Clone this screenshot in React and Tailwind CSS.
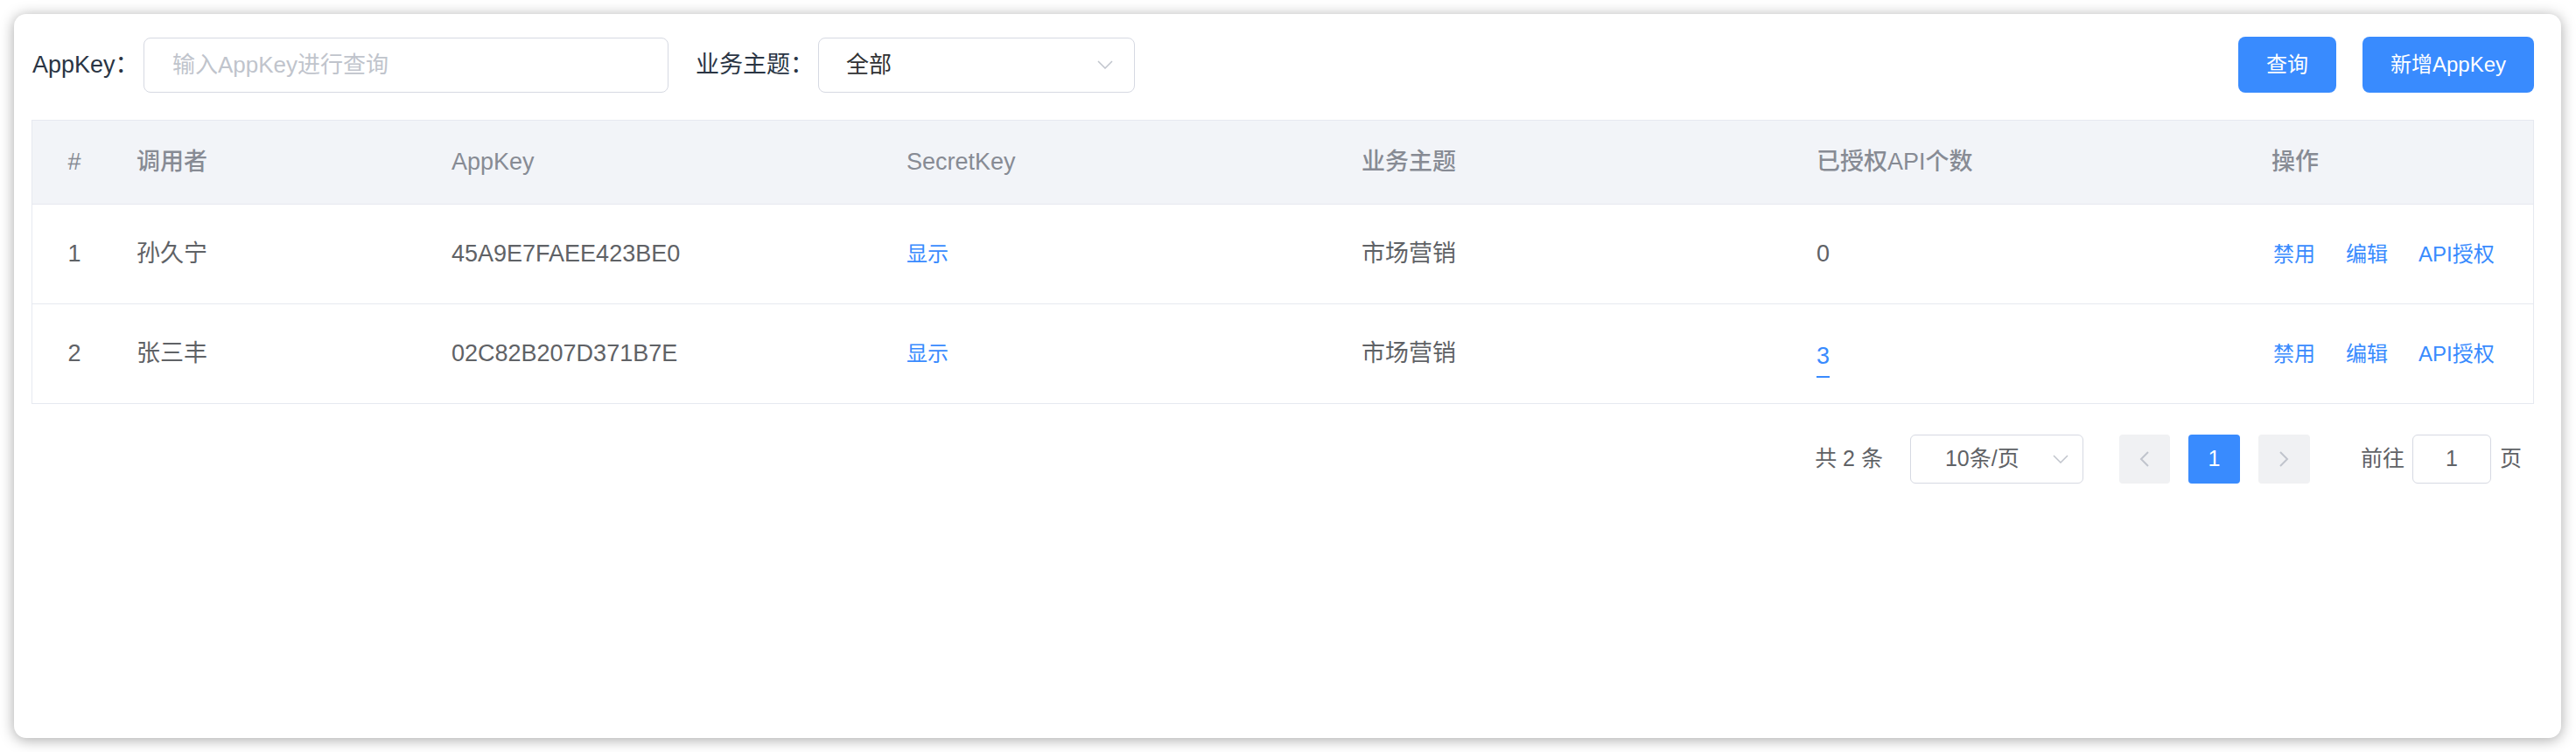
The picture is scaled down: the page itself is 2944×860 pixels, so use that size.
import React from "react";

const rows = [
  { id: 1, caller: "孙久宁", appKey: "45A9E7FAEE423BE0", topic: "市场营销", count: 0 },
  { id: 2, caller: "张三丰", appKey: "02C82B207D371B7E", topic: "市场营销", count: 3 },
];

const cols = "grid grid-cols-[96px_360px_520px_520px_520px_520px_1fr]";

const ChevronDown = ({ className }) => (
  <svg className={className} width="18" height="10" viewBox="0 0 18 10" fill="none">
    <path d="M1 1L9 9L17 1" stroke="#c0c4cc" strokeWidth="1.5" />
  </svg>
);

const Arrow = ({ dir }) => (
  <svg width="12" height="18" viewBox="0 0 12 18" fill="none">
    <path d={dir === "left" ? "M10 1L2 9L10 17" : "M2 1L10 9L2 17"} stroke="#c0c4cc" strokeWidth="2" />
  </svg>
);

export default function App() {
  return (
    <div className="h-[860px] bg-white pt-[16px] pl-[16px] pr-[17px] font-['Liberation_Sans','Noto_Sans_CJK_SC',sans-serif]">
      <div className="h-[828px] rounded-[14px] bg-white shadow-[0_2px_16px_rgba(0,0,0,0.35)] pl-[20px] pr-[31px] pt-[26px]">
        {/* Toolbar */}
        <div className="flex items-center h-[64px]">
          <span className="w-[128px] pl-[1px] text-[27px] text-[#2a3544]">AppKey：</span>
          <input
            readOnly
            placeholder="输入AppKey进行查询"
            className="w-[600px] h-[63px] border border-[#d6d9e2] rounded-[8px] px-[32px] text-[26px] outline-none placeholder:text-[#c0c4cc]"
          />
          <span className="ml-[31px] w-[140px] text-[27px] text-[#2a3544]">业务主题：</span>
          <div className="w-[362px] h-[63px] border border-[#d6d9e2] rounded-[8px] pl-[31px] pr-[24px] flex items-center justify-between">
            <span className="text-[26px] text-[#303133]">全部</span>
            <ChevronDown />
          </div>
          <div className="flex-1" />
          <button className="w-[112px] h-[64px] rounded-[8px] bg-[#398bfe] text-white text-[24px]">查询</button>
          <button className="ml-[30px] w-[196px] h-[64px] rounded-[8px] bg-[#398bfe] text-white text-[24px]">新增AppKey</button>
        </div>

        {/* Table */}
        <div className="mt-[31px] border border-[#e6e9f0] text-[27px]">
          <div className={`${cols} h-[96px] items-center bg-[#f2f4f8] border-b border-[#e6e9f0] text-[#878b94] font-medium`}>
            <div className="text-center">#</div>
            <div className="pl-[23px]">调用者</div>
            <div className="pl-[23px]">AppKey</div>
            <div className="pl-[23px]">SecretKey</div>
            <div className="pl-[23px]">业务主题</div>
            <div className="pl-[23px]">已授权API个数</div>
            <div className="pl-[23px]">操作</div>
          </div>
          {rows.map((r, i) => (
            <div
              key={r.id}
              className={`${cols} items-center text-[#5f6266] ${i === 0 ? "h-[114px] border-b border-[#e6e9f0]" : "h-[113px]"}`}
            >
              <div className="text-center">{r.id}</div>
              <div className="pl-[23px]">{r.caller}</div>
              <div className="pl-[23px]">{r.appKey}</div>
              <div className="pl-[23px] text-[24px] text-[#398bfe]">显示</div>
              <div className="pl-[23px]">{r.topic}</div>
              <div className="pl-[23px]">
                {r.count > 0 ? (
                  <span className="inline-block text-[#398bfe] border-b-2 border-[#398bfe] leading-[30px] pb-[8px] relative top-[5px]">{r.count}</span>
                ) : (
                  r.count
                )}
              </div>
              <div className="pl-[25px] flex gap-[35px] text-[24px] text-[#398bfe]">
                <span>禁用</span>
                <span>编辑</span>
                <span>API授权</span>
              </div>
            </div>
          ))}
        </div>

        {/* Pagination */}
        <div className="mt-[35px] flex items-center justify-end pr-[14px] text-[25px] text-[#5f6266]">
          <span className="whitespace-pre">共 2 条</span>
          <div className="ml-[31px] w-[198px] h-[56px] border border-[#d6d9e2] rounded-[6px] flex items-center pl-[39px] pr-[16px] justify-between">
            <span>10条/页</span>
            <ChevronDown />
          </div>
          <div className="ml-[41px] w-[58px] h-[56px] rounded-[4px] bg-[#f0f1f3] flex items-center justify-center">
            <Arrow dir="left" />
          </div>
          <div className="ml-[21px] w-[59px] h-[56px] rounded-[4px] bg-[#398bfe] text-white flex items-center justify-center">1</div>
          <div className="ml-[21px] w-[59px] h-[56px] rounded-[4px] bg-[#f0f1f3] flex items-center justify-center">
            <Arrow dir="right" />
          </div>
          <span className="ml-[58px]">前往</span>
          <div className="ml-[9px] w-[90px] h-[56px] border border-[#d6d9e2] rounded-[6px] flex items-center justify-center">1</div>
          <span className="ml-[10px]">页</span>
        </div>
      </div>
    </div>
  );
}
